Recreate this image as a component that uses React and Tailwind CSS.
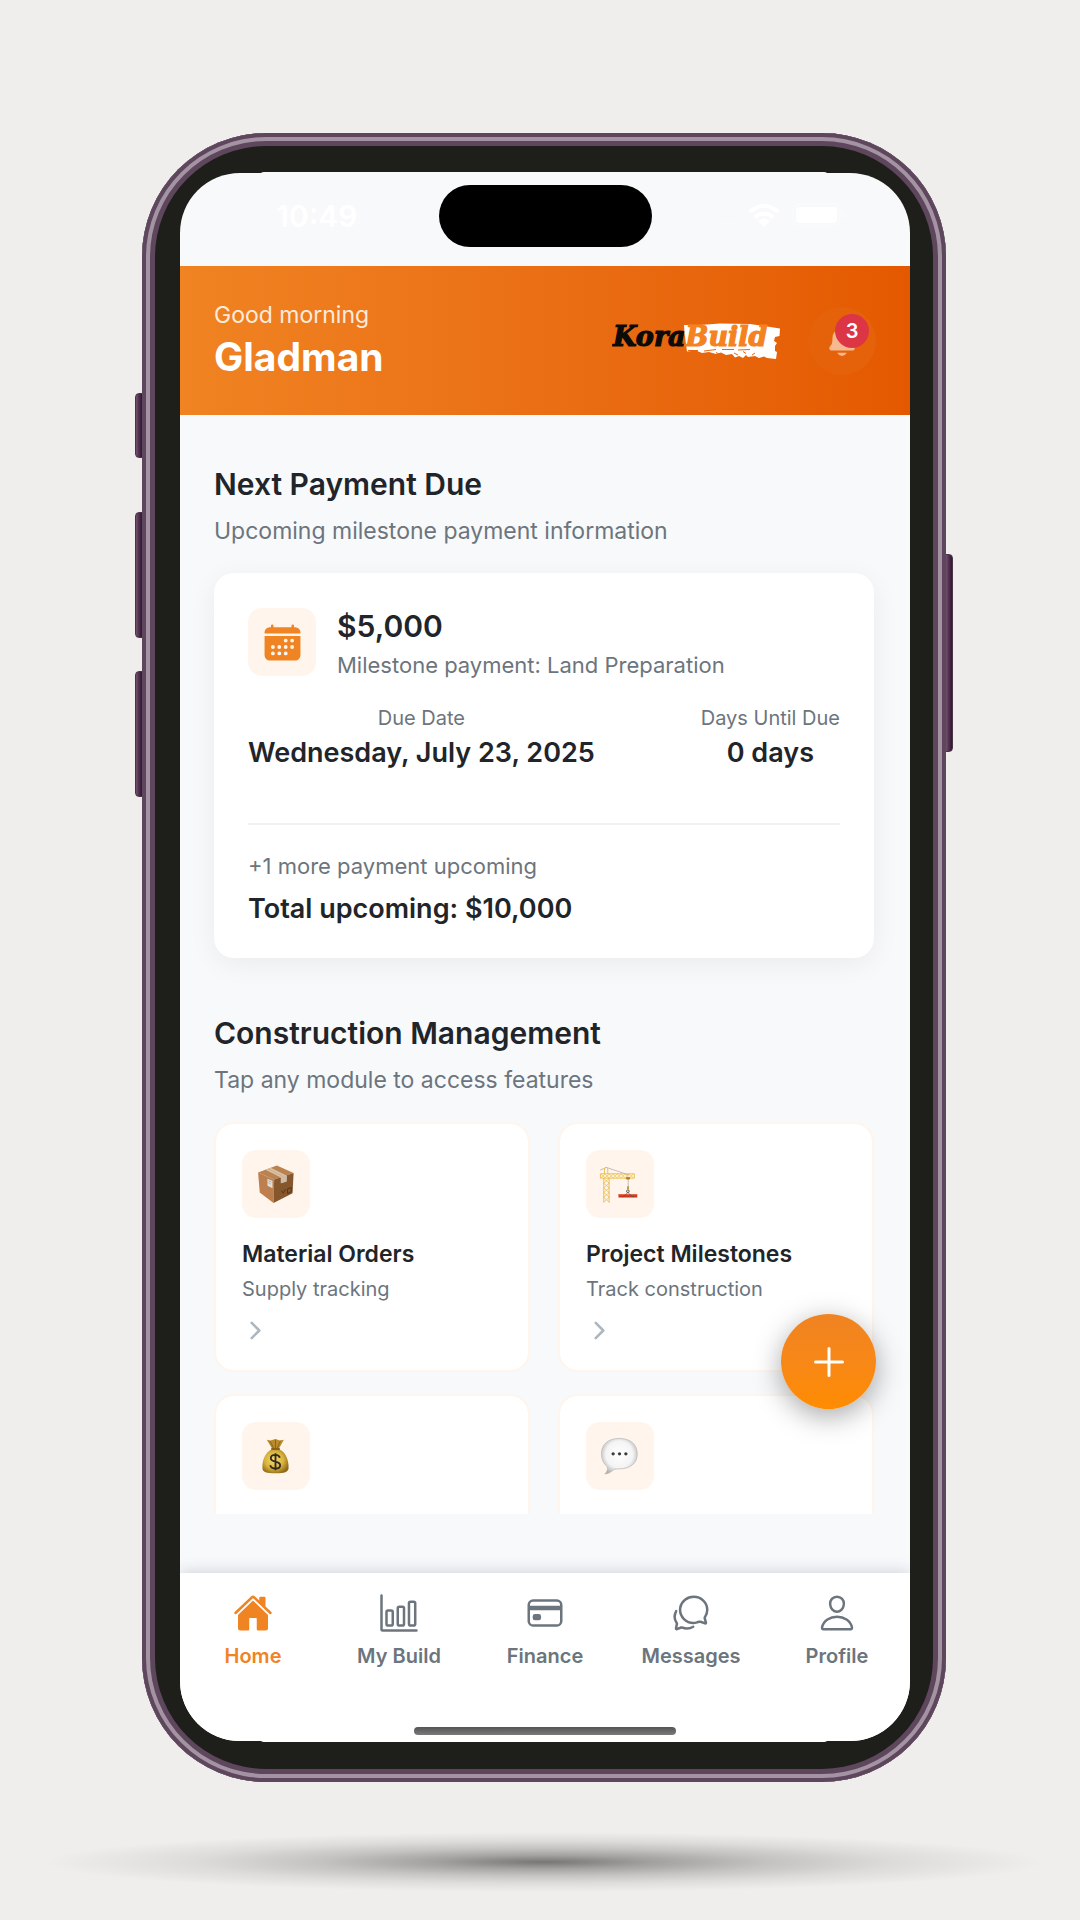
import React from 'react';
import {
  IoAdd,
  IoBarChartOutline,
  IoCalendar,
  IoCardOutline,
  IoChatbubblesOutline,
  IoChevronForward,
  IoHome,
  IoNotifications,
  IoPersonOutline,
} from 'react-icons/io5';

function BoxArt() {
  return (
    <svg viewBox="128 121 203 203" className="size-full" aria-hidden="true">
      <path d="M176 188 232 167 282 190 224 209Z" fill="#b9834f" />
      <path d="M176 188 224 209 222 279 181 248Z" fill="#bd7f4d" />
      <path d="M224 209 282 190 279 250 222 279Z" fill="#86562d" />
      <path d="M198 180 214 174 262 198 261 215 244 220 244 203Z" fill="#d9c0a4" />
      <path d="M206 177 252 201" stroke="#c6a581" strokeWidth="2" fill="none" />
      <path d="M244 203 261 198 261 215 244 220Z" fill="#cdbba8" />
      <path d="M204 207 219 213 219 235 204 228Z" fill="#e2ddd6" />
      <path d="M207 213 216 217M207 219 213 222" stroke="#9a9a96" strokeWidth="2" />
      <path d="M246 242 251 250 258 238M264 237 275 233V246L264 251Z" stroke="#4f3015" strokeWidth="2.5" fill="none" />
    </svg>
  );
}

function CraneArt() {
  return (
    <svg viewBox="111 121 203 203" className="size-full" aria-hidden="true">
      <path d="M153 181 172 173 240 196" stroke="#8a8a80" strokeWidth="1.5" fill="none" />
      <g fill="none" stroke="#e9b93a" strokeWidth="2.6">
        <path d="M164 205V278M180 205V278M154 192H255M154 205H255M154 192V205M255 192V205" />
        <path d="M166 192V177L171 172 176 177V192" />
        <path d="M164 206 180 220 164 234 180 248 164 262 180 277M180 206 164 220 180 234 164 248 180 262 164 277" strokeWidth="2" />
        <path d="M156 193 168 204 180 193 192 204 204 193 216 204 228 193 240 204 252 193M156 204 168 193 180 204 192 193 204 204 216 193 228 204 240 193 252 204" strokeWidth="1.8" />
      </g>
      <path d="M230 202H243L241 209H232Z" fill="#a37a1c" />
      <path d="M237 208V230" stroke="#8a8a80" strokeWidth="1.5" />
      <path d="M234 229H239V238H234Z" fill="#b08d20" />
      <circle cx="236" cy="244" r="4" fill="none" stroke="#444" strokeWidth="2.5" />
      <path d="M208 253H264V263H208Z" fill="#c9341c" />
      <path d="M208 253H264V256H208Z" fill="#e46a4c" />
      <path d="M220 262 236 248 252 262" fill="none" stroke="#554" strokeWidth="2" />
    </svg>
  );
}

function MoneyArt() {
  return (
    <svg viewBox="128 936 203 203" className="size-full" aria-hidden="true">
      <defs>
        <radialGradient id="bag" cx="0.45" cy="0.45" r="0.6">
          <stop offset="0" stopColor="#f3dc72" />
          <stop offset="0.6" stopColor="#d9b13c" />
          <stop offset="1" stopColor="#8f6a18" />
        </radialGradient>
      </defs>
      <path d="M202 989 213 991 228 987 241 991 253 989 238 1016H218Z" fill="#b98b2b" />
      <path d="M212 993 222 1014M228 989V1014M243 992 233 1014" stroke="#7a5612" strokeWidth="2" />
      <path d="M217 1017C200 1024 187 1048 189 1074 190 1086 200 1089 228 1089S265 1086 267 1074C268 1048 257 1024 239 1017Z" fill="url(#bag)" />
      <path d="M215 1014H241V1019H215Z" fill="#6e4a12" />
      <path d="M241 1043C239 1036 234 1034 228 1034 219 1034 214 1038 214 1044 214 1058 242 1050 242 1065 242 1072 236 1075 228 1075 219 1075 214 1071 212 1065M228 1029V1080" fill="none" stroke="#33291f" strokeWidth="5.5" />
    </svg>
  );
}

function SpeechArt() {
  return (
    <svg viewBox="111 936 203 203" className="size-full" aria-hidden="true">
      <defs>
        <radialGradient id="bubble" cx="0.5" cy="0.45" r="0.58">
          <stop offset="0" stopColor="#ffffff" />
          <stop offset="0.65" stopColor="#f4f4f4" />
          <stop offset="1" stopColor="#b2b2b2" />
        </radialGradient>
      </defs>
      <path
        d="M210 985C243 985 264 1002 264 1031S243 1076 210 1076C203 1076 198 1076 193 1079 186 1085 177 1091 167 1091 174 1085 177 1078 174 1069 163 1060 157 1047 157 1031 157 1002 178 985 210 985Z"
        fill="url(#bubble)"
        stroke="#b5b5b5"
        strokeWidth="2"
      />
      <g fill="#3c3c3c">
        <circle cx="192" cy="1031" r="5" />
        <circle cx="211" cy="1031" r="5" />
        <circle cx="230" cy="1031" r="5" />
      </g>
    </svg>
  );
}

function Logo() {
  return (
    <svg viewBox="0 0 170 40" className="h-10 w-[170px] shrink-0" role="img" aria-label="KoraBuild">
      <path
        d="M72 4 88 4 108 2.500 138 3 152 5 168 7.500 167.500 15 163 16 162 20 165 22 163 25 163 30 165 31 164 38 155 37 152 35.500 147 37 143 35 136 36 134 34 131 37 127 35 123 36.500 120 33 114 34 109 31.500 104 33 97 31 90 32 84 29.500 75 30.500 74 23 72.500 12Z"
        fill="#fff"
      />
      <path d="M76 29.500H86M92 30 104 28.500M110 28.500H122M126 29 138 28.500M104 31.500 108 33.500M122 32 126 34M131 30.500 134 32.500M143 32 140 34" stroke="#e9680f" strokeWidth="1" />
      <text
        x="1"
        y="25"
        fontFamily="DejaVu Serif, serif"
        fontSize="27"
        fontWeight="700"
        fontStyle="italic"
        strokeWidth="1.2"
      >
        <tspan fill="#0b0b0b" stroke="#0b0b0b">Kora</tspan>
        <tspan fill="#f58220" stroke="#f58220">Build</tspan>
      </text>
    </svg>
  );
}

function StatusBar() {
  return (
    <div className="grid h-[93px] grid-cols-[1fr_213px_1fr] items-start pt-3">
      <span className="justify-self-end pt-3 pr-[81px] text-[30px] leading-[38px] font-semibold text-white">10:49</span>
      <div className="h-[62px] rounded-full bg-black" />
      <div className="flex items-center gap-3 pt-[18px] pl-12 text-white">
        <svg viewBox="0 0 36 24" className="h-6 w-9" aria-hidden="true">
          <g fill="currentColor" opacity="0.25">
            <circle cx="3" cy="20" r="2" />
            <circle cx="13" cy="20" r="2" />
            <circle cx="23" cy="20" r="2" />
            <circle cx="33" cy="20" r="2" />
          </g>
        </svg>
        <svg viewBox="0 0 32 24" className="h-6 w-8" aria-label="Wi-Fi" role="img">
          <g fill="none" stroke="currentColor" strokeWidth="4">
            <path d="M2 9C10 1 22 1 30 9" />
            <path d="M7 14.500C12 9.500 20 9.500 25 14.500" />
          </g>
          <path d="M10 18C13.500 15 18.500 15 22 18L16 24Z" fill="currentColor" />
        </svg>
        <svg viewBox="0 0 54 24" className="h-6 w-[54px]" aria-label="Battery" role="img">
          <rect x="1" y="1" width="47" height="22" rx="7" fill="none" stroke="currentColor" strokeWidth="1.500" opacity="0.3" />
          <rect x="4" y="4" width="41" height="16" rx="4" fill="currentColor" />
          <path d="M50 8C53 9 53 15 50 16Z" fill="currentColor" opacity="0.4" />
        </svg>
      </div>
    </div>
  );
}

function Header() {
  return (
    <header className="flex h-[149px] items-center bg-linear-to-r from-[#f08322] to-[#e45900] px-[34px]">
      <div className="min-w-0 flex-1 text-white">
        <p className="text-[23px] leading-8 font-normal opacity-85">Good morning</p>
        <h1 className="mt-1 mb-1 text-[39px] leading-[44px] font-bold">Gladman</h1>
      </div>
      <Logo />
      <button
        type="button"
        aria-label="Notifications, 3 unread"
        className="relative ml-[26px] flex size-[68px] shrink-0 items-center justify-center rounded-full bg-[#e6620a]"
      >
        <IoNotifications className="size-[34px] text-[#f6b88f]" />
        <span className="absolute top-[7px] left-[27px] flex size-[34px] items-center justify-center rounded-full bg-[#dc3546] text-xl font-semibold text-white">
          3
        </span>
      </button>
    </header>
  );
}

function SectionTitle({ title, subtitle }) {
  return (
    <div>
      <h2 className="text-[30px] leading-9 font-semibold text-[#212529]">{title}</h2>
      <p className="mt-[15px] text-[23px] leading-7 text-[#6c757d]">{subtitle}</p>
    </div>
  );
}

function PaymentCard() {
  return (
    <article className="mt-7 rounded-[20px] bg-white px-[34px] pt-[35px] pb-[35px] shadow-[0_6px_28px_rgba(0,0,0,0.06)]">
      <div className="flex items-start gap-[21px]">
        <div className="flex size-[68px] shrink-0 items-center justify-center rounded-[14px] bg-[#fff5ec]">
          <IoCalendar className="size-[41px] text-[#f08322]" />
        </div>
        <div>
          <p className="text-[30px] leading-9 font-semibold text-[#212529]">$5,000</p>
          <p className="mt-[7px] text-[22px] leading-7 text-[#6c757d]">Milestone payment: Land Preparation</p>
        </div>
      </div>
      <dl className="mt-[27px] flex justify-between text-center">
        <div>
          <dt className="text-xl leading-6 text-[#6c757d]">Due Date</dt>
          <dd className="mt-[9px] text-[27px] leading-7 font-semibold text-[#212529]">Wednesday, July 23, 2025</dd>
        </div>
        <div>
          <dt className="text-xl leading-6 text-[#6c757d]">Days Until Due</dt>
          <dd className="mt-[9px] text-[27px] leading-7 font-semibold text-[#212529]">0 days</dd>
        </div>
      </dl>
      <div className="mt-14 border-t-2 border-[#f1f2f3] pt-[27px]">
        <p className="text-[22px] leading-7 text-[#6c757d]">+1 more payment upcoming</p>
        <p className="mt-[15px] text-[27px] leading-7 font-semibold text-[#212529]">Total upcoming: $10,000</p>
      </div>
    </article>
  );
}

function ModuleCard({ Art, title, subtitle }) {
  return (
    <button
      type="button"
      className="rounded-[20px] border-2 border-[#fff5ec] bg-white px-[26px] pt-[26px] pb-[26px] text-left"
    >
      <div className="size-[68px] overflow-hidden rounded-[14px] bg-[#fff5ec]">
        <Art />
      </div>
      <h3 className="mt-[22px] text-[23px] leading-7 font-semibold text-[#212529]">{title}</h3>
      <p className="mt-[9px] text-xl leading-6 text-[#6c757d]">{subtitle}</p>
      <IoChevronForward className="mt-4 size-[27px] text-[#adb5bd]" />
    </button>
  );
}

function CutModuleCard({ Art, label }) {
  return (
    <button
      type="button"
      aria-label={label}
      className="rounded-t-[20px] border-2 border-b-0 border-[#fff5ec] bg-white px-[26px] pt-[26px] pb-6 text-left"
    >
      <div className="size-[68px] overflow-hidden rounded-[14px] bg-[#fff5ec]">
        <Art />
      </div>
    </button>
  );
}

const tabs = [
  { label: 'Home', Icon: IoHome, active: true },
  { label: 'My Build', Icon: IoBarChartOutline },
  { label: 'Finance', Icon: IoCardOutline },
  { label: 'Messages', Icon: IoChatbubblesOutline },
  { label: 'Profile', Icon: IoPersonOutline },
];

function TabBar() {
  return (
    <div className="relative bg-white pt-5 pb-[6px] shadow-[0_-2px_14px_rgba(30,30,60,0.16)]">
      <nav className="grid grid-cols-5">
        {tabs.map(({ label, Icon, active }) => (
          <a
            key={label}
            href="#"
            aria-current={active ? 'page' : undefined}
            className={active ? 'flex flex-col items-center text-[#f08322]' : 'flex flex-col items-center text-[#6c757d]'}
          >
            <Icon className="size-10" />
            <span className="mt-[11px] text-xl leading-6 font-semibold">{label}</span>
          </a>
        ))}
      </nav>
      <div className="mx-auto mt-[59px] h-2 w-[262px] rounded-full bg-linear-to-b from-[#555] to-[#7a7a7a]" />
    </div>
  );
}

const sideButton =
  'absolute w-2 border border-[#4a3349] bg-linear-to-r from-[#75526f] via-[#4f2f4d] to-[#2d1a30]';

export default function App() {
  return (
    <div
      className="min-h-screen bg-[#efeeec] pt-[133px] pb-4 pl-2 antialiased"
      style={{ fontFamily: 'Inter, "Liberation Sans", sans-serif' }}
    >
      <div className="relative mx-auto w-full max-w-[804px]">
        <div className={`${sideButton} top-[260px] -left-[7px] h-[65px] rounded-l-sm`} />
        <div className={`${sideButton} top-[379px] -left-[7px] h-[126px] rounded-l-sm`} />
        <div className={`${sideButton} top-[538px] -left-[7px] h-[126px] rounded-l-sm`} />
        <div className={`${sideButton} top-[421px] -right-[7px] h-[198px] rounded-r-sm`} />

        <div className="relative rounded-[124px] bg-[#1e1e1b] pt-10 pr-9 pb-[41px] pl-[38px] shadow-[inset_0_0_0_4px_#5e475c,inset_0_0_0_8px_#a393a3,inset_0_0_0_13px_#5e475c]">
          <div className="absolute inset-x-[118px] top-[39px] h-3 rounded-t-sm bg-[#f8f9fb]" />
          <div className="absolute inset-x-[118px] bottom-10 h-3 rounded-b-sm bg-white" />
          <div className="relative overflow-hidden rounded-[60px] bg-[#f8f9fb]">
            <StatusBar />
            <Header />
            <main className="relative pt-[51px] pr-9 pb-[59px] pl-[34px]">
              <SectionTitle title="Next Payment Due" subtitle="Upcoming milestone payment information" />
              <PaymentCard />
              <div className="mt-[57px]">
                <SectionTitle title="Construction Management" subtitle="Tap any module to access features" />
              </div>
              <div className="mt-7 grid grid-cols-2 gap-x-7 gap-y-[22px]">
                <ModuleCard Art={BoxArt} title="Material Orders" subtitle="Supply tracking" />
                <ModuleCard Art={CraneArt} title="Project Milestones" subtitle="Track construction" />
                <CutModuleCard Art={MoneyArt} label="Payments" />
                <CutModuleCard Art={SpeechArt} label="Chat" />
              </div>
              <button
                type="button"
                aria-label="Add"
                className="absolute right-[34px] bottom-[164px] flex size-[95px] items-center justify-center rounded-full bg-linear-to-b from-[#f08322] to-[#ff8c00] text-white shadow-[0_7px_28px_rgba(0,0,0,0.35)]"
              >
                <IoAdd className="size-12" />
              </button>
            </main>
            <TabBar />
          </div>
        </div>
      </div>
      <div className="mx-auto mt-[50px] h-[60px] w-full max-w-[1000px] bg-[radial-gradient(ellipse_50%_50%_at_center,#777674_0%,#a3a2a0_22%,#c4c3c2_45%,#dddcdb_70%,#efeeec_100%)]" />
    </div>
  );
}
